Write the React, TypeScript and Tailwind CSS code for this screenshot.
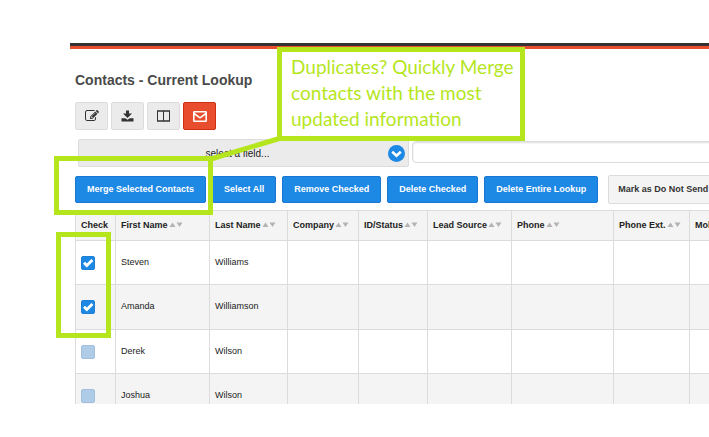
const EditIcon = () => (
    <svg width="14" height="14" viewBox="0 0 1792 1792" fill="currentColor" aria-hidden="true">
        <path d="M888 1184l116-116-152-152-116 116v56h96v96h56zm440-720q-16-16-33 1l-350 350q-17 17-1 33t33-1l350-350q17-17 1-33zm80 594v190q0 119-84.5 203.5t-203.5 84.5h-832q-119 0-203.5-84.5t-84.5-203.5v-832q0-119 84.5-203.5t203.5-84.5h832q63 0 117 25 15 7 18 23 3 17-9 29l-49 49q-14 14-32 8-23-6-45-6h-832q-66 0-113 47t-47 113v832q0 66 47 113t113 47h832q66 0 113-47t47-113v-126q0-13 9-22l64-64q15-15 35-7t20 29zm-96-738l288 288-672 672h-288v-288zm444 132l-92 92-288-288 92-92q28-28 68-28t68 28l152 152q28 28 28 68t-28 68z" />
    </svg>
);

const DownloadIcon = () => (
    <svg width="13" height="12" viewBox="0 0 13 12" fill="currentColor" aria-hidden="true">
        <path d="M5 0.5H8V3.5H11L6.5 8L2 3.5H5Z" />
        <path d="M0.5 8.2H4.2L6.5 9.8L8.8 8.2H12.5V11.5H0.5Z" />
    </svg>
);

const ColumnsIcon = () => (
    <svg width="13" height="12" viewBox="0 0 13 12" fill="none" stroke="currentColor" aria-hidden="true">
        <path d="M0.5 1V11M6.5 1V11M12.5 1V11" />
        <path d="M0 1H13M0 11H13" strokeWidth="1.6" />
    </svg>
);

const EnvelopeIcon = () => (
    <svg width="14" height="11" viewBox="0 0 14 11" fill="none" stroke="currentColor" strokeWidth="1.6" aria-hidden="true">
        <rect x="0.8" y="0.8" width="12.4" height="9.4" rx="0.5" />
        <path d="M1 2.5L7 6.8L13 2.5" />
    </svg>
);

const tools = [
    { label: 'Edit', icon: EditIcon, style: 'bg-[#ebebeb] border-[#dcdcdc] text-[#333]' },
    { label: 'Download', icon: DownloadIcon, style: 'bg-[#ebebeb] border-[#dcdcdc] text-[#333]' },
    { label: 'Columns', icon: ColumnsIcon, style: 'bg-[#ebebeb] border-[#dcdcdc] text-[#333]' },
    { label: 'Email', icon: EnvelopeIcon, style: 'bg-[#e84e2e] border-[#cf2f10] text-white' },
];

const actions = ['Merge Selected Contacts', 'Select All', 'Remove Checked', 'Delete Checked', 'Delete Entire Lookup'];

const columns = [
    { name: 'First Name', width: 'w-[94px]' },
    { name: 'Last Name', width: 'w-[78px]' },
    { name: 'Company', width: 'w-[71px]' },
    { name: 'ID/Status', width: 'w-[69px]' },
    { name: 'Lead Source', width: 'w-[84px]' },
    { name: 'Phone', width: 'w-[102px]' },
    { name: 'Phone Ext.', width: 'w-[76px]' },
    { name: 'Mobile', width: 'w-[100px]' },
];

const contacts = [
    { first: 'Steven', last: 'Williams', checked: true },
    { first: 'Amanda', last: 'Williamson', checked: true },
    { first: 'Derek', last: 'Wilson', checked: false },
    { first: 'Joshua', last: 'Wilson', checked: false },
];

const SortArrows = () => (
    <svg width="14" height="6" viewBox="0 0 14 6" className="inline-block ml-px fill-[#b3b3b3]" aria-hidden="true">
        <path d="M0.5 5L3.5 0.5L6.5 5Z" />
        <path d="M7.5 0.5H13.5L10.5 5Z" />
    </svg>
);

const RowCheckbox = ({ name, checked }: { name: string; checked: boolean }) => (
    <label className="grid w-[14px] h-[14px]">
        <input
            type="checkbox"
            aria-label={name}
            defaultChecked={checked}
            className="peer appearance-none col-start-1 row-start-1 w-[14px] h-[14px] rounded-xs border border-[#a3bfdb] bg-[#aecce8] checked:bg-[#1e88e5] checked:border-[#1e7fd6]"
        />
        <svg viewBox="0 0 14 14" className="col-start-1 row-start-1 hidden peer-checked:block pointer-events-none" aria-hidden="true">
            <path d="M3 6.8L5.8 9.6L11.4 4" fill="none" stroke="white" strokeWidth="2.8" />
        </svg>
    </label>
);

const ContactTable = () => (
    <div className="flex-1 min-h-0 overflow-hidden mt-[6px] ml-[5px]">
        <table className="table-fixed w-[715px] border-collapse text-[9px] text-[#222]">
            <thead>
                <tr className="h-[30px] bg-[#f4f4f4]">
                    <th className="w-[40px] border border-[#dcdcdc] px-[5px] text-left">Check</th>
                    {columns.map((col) => (
                        <th key={col.name} className={`${col.width} border border-[#dcdcdc] px-[5px] text-left whitespace-nowrap`}>
                            {col.name}
                            <SortArrows />
                        </th>
                    ))}
                </tr>
            </thead>
            <tbody>
                {contacts.map((c) => (
                    <tr key={c.first} className="h-[44px] even:h-[45px] even:bg-[#f4f4f4]">
                        <td className="border border-[#dcdcdc] px-[5px]">
                            <RowCheckbox name={`${c.first} ${c.last}`} checked={c.checked} />
                        </td>
                        <td className="border border-[#dcdcdc] px-[5px]">{c.first}</td>
                        <td className="border border-[#dcdcdc] px-[5px]">{c.last}</td>
                        {columns.slice(2).map((col) => (
                            <td key={col.name} className="border border-[#dcdcdc]" />
                        ))}
                    </tr>
                ))}
            </tbody>
        </table>
    </div>
);

// Green marker boxes and the callout that sit over the page
const Annotations = () => (
    <div className="absolute inset-0 pointer-events-none">
        <svg className="absolute left-0 top-0 w-full h-full" aria-hidden="true">
            <path d="M211 159L281 138" stroke="#b5e61d" strokeWidth="5" />
        </svg>
        <div className="absolute left-[54px] top-[156px] w-[159px] h-[59px] border-5 border-[#b5e61d]" />
        <div className="absolute left-[56px] top-[232px] w-[55px] h-[106px] border-5 border-[#b5e61d]" />
        <div className="absolute left-[277px] top-[47px] w-[248px] h-[94px] border-5 border-[#b5e61d] bg-white pl-[9px] pt-[2px] font-[Lato,sans-serif] text-[19px] leading-[26px] text-[#b5e61d] whitespace-nowrap">
            Duplicates? Quickly Merge
            <br />
            contacts with the most
            <br />
            updated information
        </div>
    </div>
);

export default function App() {
    return (
        <div className="relative h-screen overflow-hidden bg-white font-['Liberation_Sans',Arial,sans-serif]">
            <main className="flex flex-col h-full pt-[43px] pb-[33px] pl-[70px]">
                <div className="h-[6px] shrink-0 bg-[#333] border-b-3 border-[#e84e2e]" />

                <h1 className="mt-[21px] ml-[5px] text-[14px] leading-[20px] font-bold text-[#4a4a4a]">Contacts - Current Lookup</h1>

                <div className="flex gap-[3px] mt-3 ml-[5px]">
                    {tools.map(({ label, icon: Icon, style }) => (
                        <button key={label} aria-label={label} className={`flex items-center justify-center w-[33px] h-[28px] rounded-xs border ${style}`}>
                            <Icon />
                        </button>
                    ))}
                </div>

                <div className="flex items-start gap-[3px] mt-[9px] ml-2">
                    <div className="relative w-[331px] shrink-0">
                        <select
                            aria-label="Field"
                            className="appearance-none block w-full h-[28px] rounded-xs border border-[#dcdcdc] bg-[#ebebeb] pr-3 text-[10px] text-[#222] [text-align-last:center]"
                        >
                            <option>select a field...</option>
                        </select>
                        <span className="absolute right-1 top-[6px] flex items-center justify-center w-[17px] h-[17px] rounded-full bg-[#1e88e5] pointer-events-none">
                            <svg width="11" height="8" viewBox="0 0 11 8" aria-hidden="true">
                                <path d="M1.2 1.8L5.5 5.8L9.8 1.8" fill="none" stroke="white" strokeWidth="2.6" />
                            </svg>
                        </span>
                    </div>
                    <input
                        type="text"
                        aria-label="Search"
                        className="flex-1 min-w-0 h-[22px] mt-[2px] -mr-1 rounded-sm border border-[#dcdcdc] bg-white px-2 text-[10px] shadow-[inset_0_1px_2px_#ddd]"
                    />
                </div>

                <div className="flex items-center gap-[6px] mt-2 ml-[5px] overflow-hidden shrink-0 text-[9px] font-bold">
                    {actions.map((name) => (
                        <button key={name} className="h-[27px] shrink-0 rounded-xs border border-[#1976d2] bg-[#1e88e5] px-[11px] text-white whitespace-nowrap">
                            {name}
                        </button>
                    ))}
                    <button className="h-[29px] shrink-0 ml-1 rounded-xs border border-[#dcdcdc] bg-[#f4f4f4] px-[9px] text-[#333] whitespace-nowrap">
                        Mark as Do Not Send
                    </button>
                </div>

                <ContactTable />
            </main>
            <Annotations />
        </div>
    );
}
